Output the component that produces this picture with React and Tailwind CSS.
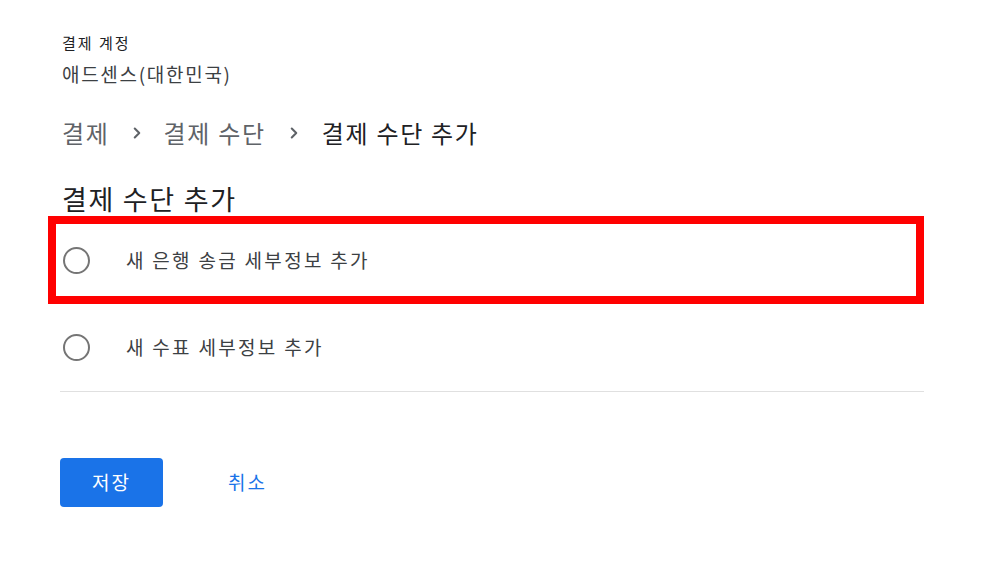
import { ChevronRight } from 'lucide-react';

// 결제 수단 추가 화면
function Radio() {
  return (
    <span className="block w-[27px] h-[27px] rounded-full border-2 border-[#757575] shrink-0"></span>
  );
}

export default function App() {
  const font = { fontFamily: '"Noto Sans CJK KR", "Noto Sans", sans-serif' };

  return (
    <div className="w-[1002px] h-[583px] bg-white" style={font}>
      <div className="pl-[60px] w-[924px]">
        <div className="pt-[33px] ml-[2px] text-[15px] leading-[20px] tracking-[2px] text-[#202124]">결제 계정</div>
        <div className="mt-[7px] ml-[2px] text-[19px] leading-[28px] tracking-[1.7px] text-[#3c4043]">애드센스(대한민국)</div>

        {/* 경로 */}
        <div className="mt-[27px] ml-[2px] h-[36px] flex items-center text-[24px] tracking-[1.7px] text-[#5f6368]">
          <span>결제</span>
          <ChevronRight className="w-[18px] h-[18px] mx-[18px] text-[#5f6368]" strokeWidth={2.75} />
          <span>결제 수단</span>
          <ChevronRight className="w-[18px] h-[18px] mx-[19px] text-[#5f6368]" strokeWidth={2.75} />
          <span className="text-[#202124]">결제 수단 추가</span>
        </div>

        <h1 className="mt-[31px] ml-[2px] text-[27px] leading-[34px] tracking-[1.7px] text-[#202124] font-normal">결제 수단 추가</h1>

        {/* 옵션 */}
        <div className="mt-0 ml-[-12px] h-[88px] border-8 border-[#ff0000] flex items-center pl-[7px]">
          <Radio />
          <span className="ml-[36px] text-[19px] tracking-[2.3px] text-[#3c4043]">새 은행 송금 세부정보 추가</span>
        </div>
        <div className="h-[88px] flex items-center border-b border-[#e0e0e0]">
          <div className="pl-[3px] flex items-center">
            <Radio />
            <span className="ml-[36px] text-[19px] tracking-[2.3px] text-[#3c4043]">새 수표 세부정보 추가</span>
          </div>
        </div>

        {/* 버튼 */}
        <div className="mt-[66px] flex items-center">
          <button className="w-[103px] h-[49px] rounded-[4px] bg-[#1a73e8] text-white text-[19px] tracking-[2px]">저장</button>
          <button className="ml-[65px] text-[19px] tracking-[2px] text-[#1a73e8]">취소</button>
        </div>
      </div>
    </div>
  );
}
